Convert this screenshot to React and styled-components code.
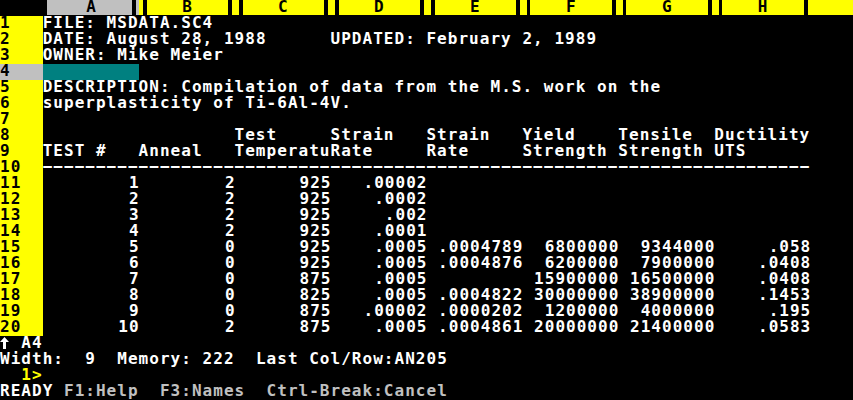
import React from 'react';
import styled, { createGlobalStyle } from 'styled-components';

const CH = 853 / 80;
const COL = CH * 9;
const LABEL = CH * 4;
const FONT_SIZE = 16;
const LS = CH - (FONT_SIZE * 1233) / 2048;
const TEMPLATE = `${LABEL}px repeat(8, ${COL}px) 1fr`;

const YELLOW = '#ffff00';
const GRAY = '#c0c0c0';
const TEAL = '#008080';

const Global = createGlobalStyle`
  html, body { margin: 0; padding: 0; background: #000; }
  body { width: 853px; height: 400px; overflow: hidden; }
`;

const Screen = styled.div`
  width: 853px;
  height: 400px;
  background: #000;
  color: #fff;
  font-family: "DejaVu Sans Mono", "Liberation Mono", monospace;
  font-weight: bold;
  font-size: ${FONT_SIZE}px;
  letter-spacing: ${LS}px;
  display: flex;
  flex-direction: column;
  overflow: hidden;
`;

const HeaderRow = styled.div`
  display: grid;
  grid-template-columns: ${TEMPLATE};
  height: 16px;
  align-items: start;
`;

const Corner = styled.div`
  height: 15px;
  background: #000;
`;

const HeadCell = styled.div`
  height: 15px;
  display: flex;
  align-items: stretch;
  background: ${p => (p.$active ? GRAY : YELLOW)};
  color: #000;
  line-height: 14px;
`;

const LeftBar = styled.div`
  flex: none;
  background: #000;
  width: ${p => (p.$active ? '4.7px' : '3.4px')};
  margin-left: ${p => (p.$active ? '0' : '4.7px')};
`;

const RightBar = styled.div`
  flex: none;
  width: 3.6px;
  margin-right: 2.7px;
  background: #000;
`;

const HeadLabel = styled.div`
  flex: 1;
  text-align: center;
  padding-left: ${p => (p.$active ? '3.4px' : '0')};
`;

const HeadFill = styled.div`
  height: 15px;
  background: ${YELLOW};
`;

const SheetRow = styled.div`
  display: grid;
  grid-template-columns: ${TEMPLATE};
  height: 16px;
  line-height: 14px;
`;

const RowLabel = styled.div`
  background: ${p => (p.$active ? GRAY : YELLOW)};
  color: #000;
  white-space: pre;
`;

const Cell = styled.div`
  white-space: pre;
  overflow: visible;
  text-align: ${p => p.$align || 'left'};
  margin-right: ${p => (p.$align === 'right' ? `-${LS}px` : '0')};
  background: ${p => (p.$active ? TEAL : 'transparent')};
  min-width: 0;
`;

const Rule = styled.div`
  grid-column: 2 / span 8;
  white-space: pre;
  overflow: hidden;
`;

const StatusLine = styled.div`
  height: 16px;
  line-height: 14px;
  white-space: pre;
  display: flex;
  align-items: flex-start;
`;

const ArrowBox = styled.span`
  display: flex;
  width: ${CH}px;
  height: 16px;
  align-items: flex-start;
  padding-top: 1px;
  box-sizing: border-box;
`;

const Tone = styled.span`
  color: ${p => (p.$tone === 'yellow' ? YELLOW : p.$tone === 'gray' ? GRAY : '#fff')};
`;

const UpArrow = () => (
  <ArrowBox>
    <svg width="9" height="12" viewBox="0 0 9 12" aria-hidden="true">
      <path d="M4.5 0 L9 5 L6 5 L6 12 L3 12 L3 5 L0 5 Z" fill="#fff" />
    </svg>
  </ArrowBox>
);

const columns = ['A', 'B', 'C', 'D', 'E', 'F', 'G', 'H'];

const L = t => ({ t, a: 'left' });
const R = t => ({ t, a: 'right' });

const rows = [
  [L('FILE: MSDATA.SC4')],
  [L('DATE: August 28, 1988'), L(''), L(''), L('UPDATED: February 2, 1989')],
  [L('OWNER: Mike Meier')],
  [],
  [L('DESCRIPTION: Compilation of data from the M.S. work on the')],
  [L('superplasticity of Ti-6Al-4V.')],
  [],
  [L(''), L(''), L('Test'), L('Strain'), L('Strain'), L('Yield'), L('Tensile'), L('Ductility')],
  [L('TEST #'), L('Anneal'), L('Temperatu'), L('Rate'), L('Rate'), L('Strength'), L('Strength'), L('UTS')],
  'rule',
  [R('1'), R('2'), R('925'), R('.00002')],
  [R('2'), R('2'), R('925'), R('.0002')],
  [R('3'), R('2'), R('925'), R('.002')],
  [R('4'), R('2'), R('925'), R('.0001')],
  [R('5'), R('0'), R('925'), R('.0005'), R('.0004789'), R('6800000'), R('9344000'), R('.058')],
  [R('6'), R('0'), R('925'), R('.0005'), R('.0004876'), R('6200000'), R('7900000'), R('.0408')],
  [R('7'), R('0'), R('875'), R('.0005'), R(''), R('15900000'), R('16500000'), R('.0408')],
  [R('8'), R('0'), R('825'), R('.0005'), R('.0004822'), R('30000000'), R('38900000'), R('.1453')],
  [R('9'), R('0'), R('875'), R('.00002'), R('.0000202'), R('1200000'), R('4000000'), R('.195')],
  [R('10'), R('2'), R('875'), R('.0005'), R('.0004861'), R('20000000'), R('21400000'), R('.0583')],
];

const ACTIVE_ROW = 4;
const ACTIVE_COL = 0;

export default function App() {
  return (
    <>
      <Global />
      <Screen>
        <HeaderRow>
          <Corner />
          {columns.map((c, i) => (
            <HeadCell key={c} $active={i === ACTIVE_COL}>
              <LeftBar $active={i === ACTIVE_COL} />
              <HeadLabel $active={i === ACTIVE_COL}>{c}</HeadLabel>
              <RightBar />
            </HeadCell>
          ))}
          <HeadFill />
        </HeaderRow>

        {rows.map((row, ri) => {
          const n = ri + 1;
          const active = n === ACTIVE_ROW;
          return (
            <SheetRow key={n}>
              <RowLabel $active={active}>{String(n)}</RowLabel>
              {row === 'rule' ? (
                <Rule>{'\u2212'.repeat(72)}</Rule>
              ) : (
                columns.map((c, ci) => {
                  const cell = row[ci];
                  return (
                    <Cell key={c} $align={cell ? cell.a : 'left'} $active={active && ci === ACTIVE_COL}>
                      {cell ? cell.t : ''}
                    </Cell>
                  );
                })
              )}
            </SheetRow>
          );
        })}

        <StatusLine>
          <UpArrow />
          <span>{' A4'}</span>
        </StatusLine>
        <StatusLine>{'Width:  9  Memory: 222  Last Col/Row:AN205'}</StatusLine>
        <StatusLine>
          <Tone $tone="yellow">{'  1>'}</Tone>
        </StatusLine>
        <StatusLine>
          <Tone>READY</Tone>
          <Tone $tone="gray">{' F1:Help  F3:Names  Ctrl-Break:Cancel'}</Tone>
        </StatusLine>
      </Screen>
    </>
  );
}
